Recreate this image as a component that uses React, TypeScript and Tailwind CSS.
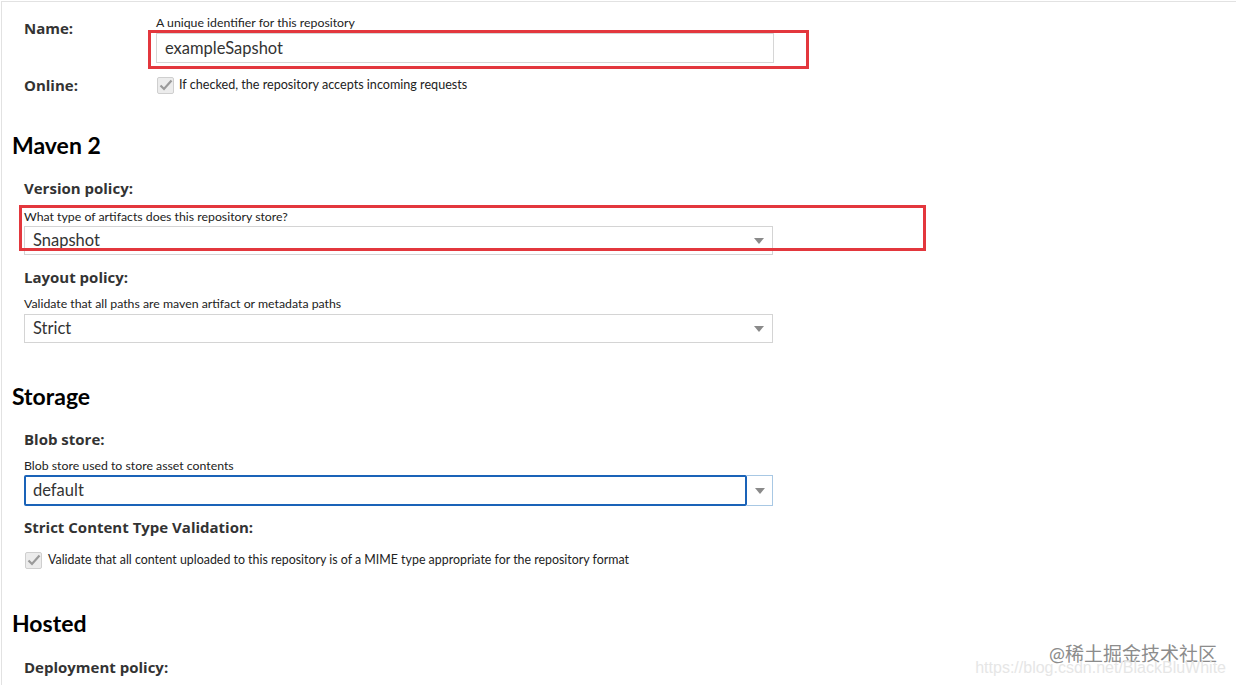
import React from "react";

const font = { fontFamily: "Lato, 'Noto Sans CJK SC', sans-serif" };

function Check() {
  return (
    <span className="flex h-[17px] w-[17px] flex-none items-center justify-center rounded-[2px] border border-[#cfcfcf] bg-[#ececec]">
      <svg width="14" height="12" viewBox="0 0 14 12">
        <path d="M1.5 6.5 L5 10 L12.5 1.5" fill="none" stroke="#9a9a9a" strokeWidth="2.2" />
      </svg>
    </span>
  );
}

function Arrow() {
  return (
    <svg width="10" height="6" viewBox="0 0 10 6">
      <path d="M0 0 H10 L5 6 Z" fill="#8a8a8a" />
    </svg>
  );
}

function Select({ value }: { value: string }) {
  return (
    <div className="flex h-[29px] w-[749px] items-center justify-between border border-[#d4d4d4] bg-white pl-[8px] pr-[8px]">
      <span className="text-[16.5px] text-[#333]">{value}</span>
      <Arrow />
    </div>
  );
}

function Label({ children, className = "" }: { children: React.ReactNode; className?: string }) {
  return (
    <div className={`font-['Open_Sans',sans-serif] text-[15px] font-bold leading-[20px] text-[#333] ${className}`}>
      {children}
    </div>
  );
}

function Help({ children, className = "" }: { children: React.ReactNode; className?: string }) {
  return <div className={`text-[12.3px] leading-[14px] text-[#222] ${className}`}>{children}</div>;
}

function Heading({ children, className = "" }: { children: React.ReactNode; className?: string }) {
  return <h2 className={`pl-[10px] text-[23px] font-bold leading-[28px] text-black ${className}`}>{children}</h2>;
}

export default function App() {
  return (
    <div className="h-[685px] overflow-hidden bg-white pl-px pt-px" style={font}>
      <div className="relative h-full border-l border-t border-[#e2e2e2]">
        {/* Name */}
        <div className="flex pl-[22px] pt-[14px]">
          <Label className="w-[132px] pt-[2px]">Name:</Label>
          <div>
            <Help className="h-[17px]">A unique identifier for this repository</Help>
            <div className="flex h-[30px] w-[618px] items-center border border-[#d6d6d6] pl-[8px] text-[16.5px] text-[#333]">
              exampleSapshot
            </div>
          </div>
        </div>

        {/* Online */}
        <div className="mt-[12px] flex h-[20px] items-center pl-[22px]">
          <Label className="w-[133px]">Online:</Label>
          <Check />
          <span className="ml-[5px] text-[12.6px] text-[#222]">If checked, the repository accepts incoming requests</span>
        </div>

        <Heading className="mt-[36px]">Maven 2</Heading>
        <div className="pl-[22px]">
          <Label className="mt-[19px]">Version policy:</Label>
          <Help className="mt-[12px] h-[16px]">What type of artifacts does this repository store?</Help>
          <Select value="Snapshot" />

          <Label className="mt-[12px]">Layout policy:</Label>
          <Help className="mt-[10px] h-[17px]">Validate that all paths are maven artifact or metadata paths</Help>
          <Select value="Strict" />
        </div>

        <Heading className="mt-[39px]">Storage</Heading>
        <div className="pl-[22px]">
          <Label className="mt-[19px]">Blob store:</Label>
          <Help className="mt-[10px] h-[16px]">Blob store used to store asset contents</Help>
          <div className="flex h-[31px] w-[749px]">
            <div className="flex flex-1 items-center rounded-[2px] border-2 border-[#1a63b8] pl-[7px] text-[16.5px] text-[#333]">
              default
            </div>
            <div className="flex w-[26px] items-center justify-center border border-l-0 border-[#a8c8e4]">
              <Arrow />
            </div>
          </div>

          <Label className="mt-[11px]">Strict Content Type Validation:</Label>
          <div className="mt-[13px] flex h-[20px] items-center pl-px">
            <Check />
            <span className="ml-[6px] text-[12.4px] text-[#222]">
              Validate that all content uploaded to this repository is of a MIME type appropriate for the repository format
            </span>
          </div>
        </div>

        <Heading className="mt-[39px]">Hosted</Heading>
        <div className="pl-[22px]">
          <Label className="mt-[20px]">Deployment policy:</Label>
        </div>

        {/* annotation boxes */}
        <div className="pointer-events-none absolute left-[146px] top-[28px] h-[39px] w-[661px] border-[3px] border-[#e3373d]" />
        <div className="pointer-events-none absolute left-[17px] top-[203px] h-[46px] w-[907px] border-[3px] border-[#e3373d]" />

        {/* watermark */}
        <div className="pointer-events-none absolute right-[19px] top-[640px] text-[19px] leading-[24px] text-[#8c8c8c]">
          @稀土掘金技术社区
        </div>
        <div className="pointer-events-none absolute right-[10px] top-[656px] text-[16px] leading-[20px] text-[#e6e6e6]" style={{ fontFamily: "Arial, 'Liberation Sans', sans-serif" }}>
          https://blog.csdn.net/BlackBluWhite
        </div>
      </div>
    </div>
  );
}
